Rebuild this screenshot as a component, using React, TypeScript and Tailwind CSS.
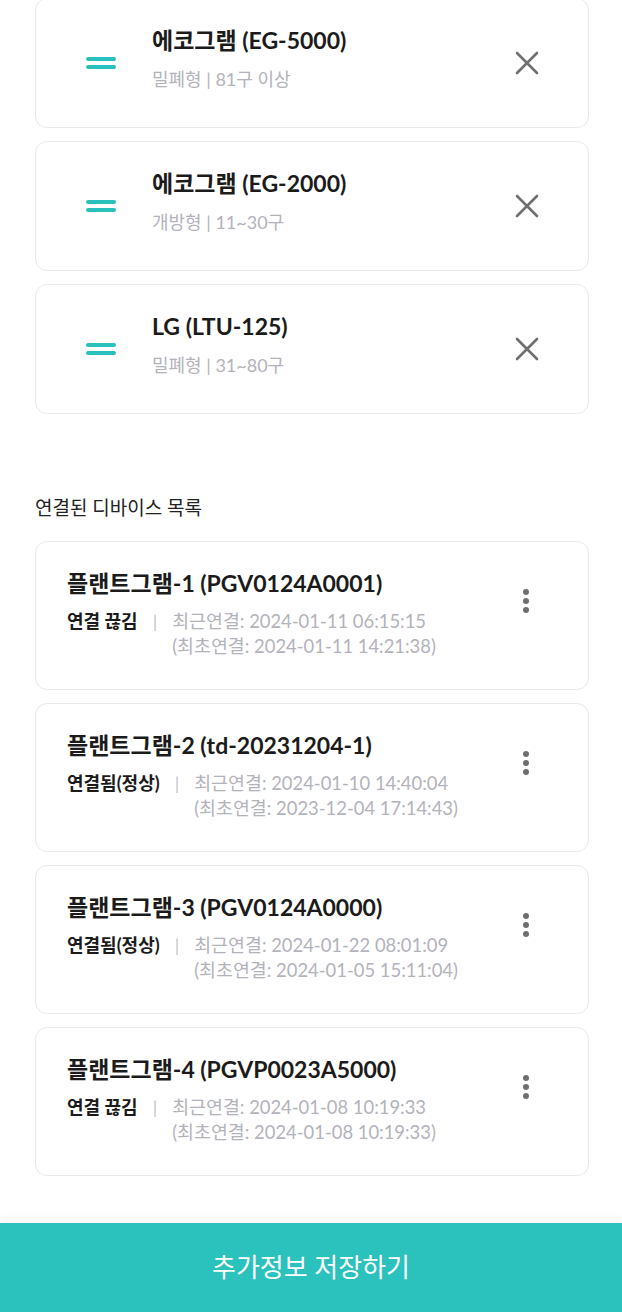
const models = [
  { name: '에코그램 (EG-5000)', desc: '밀폐형 | 81구 이상' },
  { name: '에코그램 (EG-2000)', desc: '개방형 | 11~30구' },
  { name: 'LG (LTU-125)', desc: '밀폐형 | 31~80구' },
];

const devices = [
  { name: '플랜트그램-1 (PGV0124A0001)', status: '연결 끊김', recent: '2024-01-11 06:15:15', first: '2024-01-11 14:21:38' },
  { name: '플랜트그램-2 (td-20231204-1)', status: '연결됨(정상)', recent: '2024-01-10 14:40:04', first: '2023-12-04 17:14:43' },
  { name: '플랜트그램-3 (PGV0124A0000)', status: '연결됨(정상)', recent: '2024-01-22 08:01:09', first: '2024-01-05 15:11:04' },
  { name: '플랜트그램-4 (PGVP0023A5000)', status: '연결 끊김', recent: '2024-01-08 10:19:33', first: '2024-01-08 10:19:33' },
];

const DragHandle = () => (
  <div className="flex flex-col gap-[4px] w-[30px] -mt-[1px]">
    <span className="h-[4px] rounded-sm bg-[#2bc1bc]" />
    <span className="h-[4px] rounded-sm bg-[#2bc1bc]" />
  </div>
);

const CloseIcon = () => (
  <svg width="24" height="24" viewBox="0 0 24 24" className="text-[#6f6f6f]">
    <path d="M2 2L22 22M22 2L2 22" stroke="currentColor" strokeWidth="2.6" strokeLinecap="round" />
  </svg>
);

const ModelCard = ({ name, desc }: { name: string; desc: string }) => (
  <div className="flex items-center h-[130px] rounded-xl border border-[#e9e9ec] bg-white pl-[50px] pr-[49px]">
    <DragHandle />
    <div className="flex flex-col ml-[36px] flex-1 -mt-[11px]">
      <span className="text-[23px] leading-[30px] font-bold text-[#1b1b1b]">{name}</span>
      <span className="text-[18px] leading-[24px] mt-[12px] text-[#b3b3bb]">{desc}</span>
    </div>
    <CloseIcon />
  </div>
);

const DeviceCard = ({ name, status, recent, first }: (typeof devices)[number]) => (
  <div className="flex h-[149px] rounded-xl border border-[#e9e9ec] bg-white pl-[31px] pr-[59px] pt-[26px]">
    <div className="flex flex-col flex-1">
      <span className="text-[23px] leading-[30px] font-bold text-[#1b1b1b]">{name}</span>
      <div className="flex mt-[11px] leading-[25px]">
        <span className="text-[18px] font-bold text-[#1b1b1b]">{status}</span>
        <span className="mx-[15px] text-[18px] text-[#c2c5cc]">|</span>
        <div className="flex flex-col text-[18.4px] text-[#b3b3bb]">
          <span>최근연결: {recent}</span>
          <span>(최초연결: {first})</span>
        </div>
      </div>
    </div>
    <div className="flex flex-col gap-[3px] mt-[21px]">
      <span className="w-[6px] h-[6px] rounded-full bg-[#6f6f6f]" />
      <span className="w-[6px] h-[6px] rounded-full bg-[#6f6f6f]" />
      <span className="w-[6px] h-[6px] rounded-full bg-[#6f6f6f]" />
    </div>
  </div>
);

export default function App() {
  return (
    <div className="w-[622px] h-[1312px] overflow-hidden bg-white flex flex-col" style={{ fontFamily: "Lato, 'Noto Sans CJK KR', sans-serif" }}>
      <div className="flex flex-col pl-[35px] pr-[33px] -mt-[2px]">
        <div className="flex flex-col gap-[13px]">
          {models.map((m) => (
            <ModelCard key={m.name} {...m} />
          ))}
        </div>
        <h2 className="mt-[81px] text-[19px] leading-[26px] text-[#222]">연결된 디바이스 목록</h2>
        <div className="flex flex-col gap-[13px] mt-[20px]">
          {devices.map((d) => (
            <DeviceCard key={d.name} {...d} />
          ))}
        </div>
      </div>
      <button className="mt-auto h-[89px] w-full bg-[#2bc1bc] text-white text-[26px] shadow-[0_-4px_10px_rgba(0,0,0,0.04)]">
        추가정보 저장하기
      </button>
    </div>
  );
}
